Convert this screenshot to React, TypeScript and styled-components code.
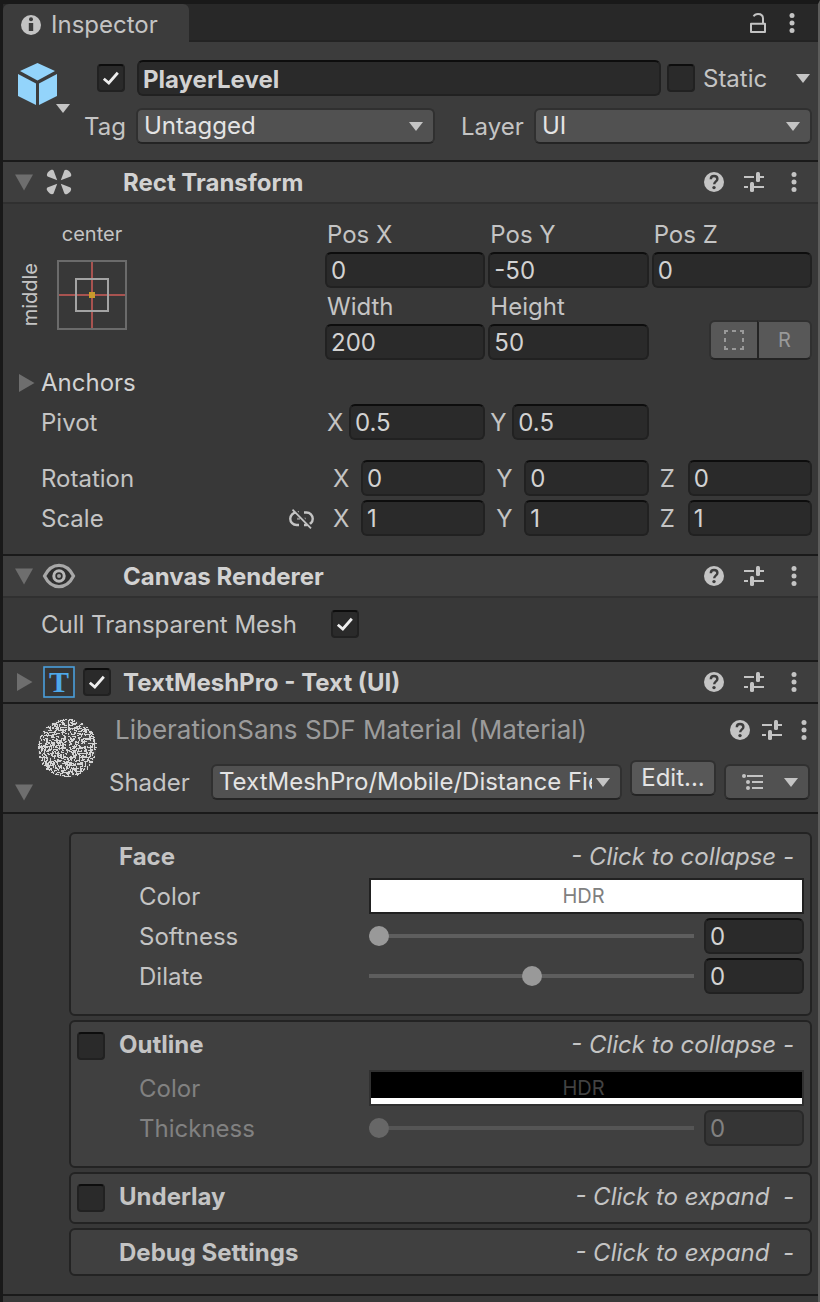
import React from "react";
import styled, { createGlobalStyle, css } from "styled-components";

const GlobalStyle = createGlobalStyle`
  *, *::before, *::after { box-sizing: border-box; }
  body {
    margin: 0;
    background: #383838;
    color: #c4c4c4;
    font-family: Inter, "Liberation Sans", sans-serif;
    font-size: 24px;
    line-height: 34px;
  }
  button, input, select { font: inherit; color: inherit; margin: 0; }
  label { padding-top: 2px; }
  svg { display: block; flex: none; overflow: visible; }
`;

/* ---------- window ---------- */

const Window = styled.main`
  min-height: 100vh;
  display: flex;
  flex-direction: column;
  background: #383838;
  border-top: 4px solid #191919;
  border-left: 3px solid #191919;
  border-right: 2px solid #5c5c5b;
`;

const TabBar = styled.div`
  display: flex;
  align-items: stretch;
  height: 38px;
  background: #282828;
  box-shadow: inset 0 -2px 0 #232323;
`;

const Tab = styled.button`
  display: flex;
  align-items: center;
  gap: 10px;
  width: 186px;
  padding: 4px 0 0 18px;
  border: 0;
  border-radius: 6px 6px 0 0;
  background: #3c3c3c;
`;

const TabTools = styled.div`
  margin-left: auto;
  display: flex;
  align-items: center;
  gap: 16px;
  padding-right: 16px;
`;

const IconButton = styled.button`
  display: flex;
  align-items: center;
  justify-content: center;
  padding: 0;
  border: 0;
  background: none;
`;

/* ---------- controls ---------- */

const sunken = css`
  border: 2px solid #212121;
  border-top-color: #0d0d0d;
  border-radius: 6px;
  background: #2a2a2a;
`;

const raised = css`
  border: 2px solid #303030;
  border-bottom-color: #242424;
  border-radius: 6px;
  background: #515151;
  color: #e4e4e4;
`;

const TextField = styled.input<{ $bold?: boolean }>`
  ${sunken}
  display: block;
  flex: 1;
  width: 100%;
  min-width: 0;
  height: 36px;
  padding: ${(p) => (p.$bold ? 2 : 0)}px 4px 0;
  color: #d2d2d2;
  font-weight: ${(p) => (p.$bold ? 700 : 400)};
  line-height: 30px;
  outline: none;
  &:disabled {
    background: #353535;
    border-color: #292929;
    color: #818181;
  }
`;

const CheckWrap = styled.span`
  position: relative;
  display: block;
  flex: none;
  width: 28px;
  height: 28px;
  svg {
    position: absolute;
    inset: 0;
    pointer-events: none;
  }
`;

const CheckInput = styled.input`
  ${sunken}
  appearance: none;
  display: block;
  width: 28px;
  height: 28px;
  border-radius: 4px;
`;

function CheckBox({ id, label, checked }: { id: string; label?: string; checked?: boolean }) {
  return (
    <CheckWrap>
      <CheckInput id={id} type="checkbox" aria-label={label} defaultChecked={checked} />
      {checked && (
        <svg width="28" height="28" viewBox="0 0 28 28">
          <path d="M6.8 14.8 11.8 19 20.8 8.8" fill="none" stroke="#eeeeee" strokeWidth="2.8" />
        </svg>
      )}
    </CheckWrap>
  );
}

const SelectWrap = styled.span<{ $grow: number }>`
  position: relative;
  display: block;
  flex: ${(p) => p.$grow} 1 0;
  min-width: 0;
  svg {
    position: absolute;
    right: 12px;
    top: 14px;
    pointer-events: none;
  }
`;

const SelectBox = styled.select`
  ${raised}
  appearance: none;
  display: block;
  width: 100%;
  height: 36px;
  padding: 0 28px 0 6px;
  line-height: 30px;
  outline: none;
`;

function Caret() {
  return (
    <svg width="14" height="9" viewBox="0 0 14 9">
      <path d="M0 0h14L7 9z" fill="#c4c4c4" />
    </svg>
  );
}

function Select({ id, value, grow = 1 }: { id: string; value: string; grow?: number }) {
  return (
    <SelectWrap $grow={grow}>
      <SelectBox id={id} defaultValue={value}>
        <option>{value}</option>
      </SelectBox>
      <Caret />
    </SelectWrap>
  );
}

const PushButton = styled.button`
  ${raised}
  flex: none;
  width: 86px;
  height: 36px;
  padding: 0;
  line-height: 30px;
  background: #585858;
`;

const ListButton = styled(PushButton)`
  display: flex;
  align-items: center;
  justify-content: space-between;
  padding: 0 10px 0 16px;
  background: #515151;
`;

const Range = styled.input`
  appearance: none;
  display: block;
  flex: 1;
  min-width: 0;
  height: 20px;
  background: none;
  &::-webkit-slider-runnable-track {
    height: 4px;
    background: #5e5e5e;
  }
  &::-webkit-slider-thumb {
    appearance: none;
    width: 20px;
    height: 20px;
    margin-top: -8px;
    border-radius: 50%;
    background: #999999;
  }
  &:disabled::-webkit-slider-runnable-track { background: #555555; }
  &:disabled::-webkit-slider-thumb { background: #676767; }
`;

/* ---------- icons ---------- */

function InfoIcon() {
  return (
    <svg width="20" height="20" viewBox="0 0 20 20">
      <circle cx="10" cy="10" r="10" fill="#c4c4c4" />
      <circle cx="10" cy="4.2" r="2" fill="#3c3c3c" />
      <path d="M7.8 8h4.4v8H7.8z" fill="#3c3c3c" />
    </svg>
  );
}

function LockIcon() {
  return (
    <svg width="16" height="20" viewBox="0 0 16 20">
      <path d="M1 10.8h14v8.2H1z" fill="none" stroke="#c4c4c4" strokeWidth="2" strokeLinejoin="round" />
      <path d="M3.6 3.4C4.4 1.8 6 1 8 1c3 0 5 1.8 5 4.6V10" fill="none" stroke="#c4c4c4" strokeWidth="2" />
    </svg>
  );
}

function DotsIcon() {
  return (
    <svg width="20" height="20" viewBox="0 0 20 20" fill="#c4c4c4">
      <circle cx="10" cy="2.5" r="2.5" />
      <circle cx="10" cy="10" r="2.5" />
      <circle cx="10" cy="17.5" r="2.5" />
    </svg>
  );
}

function HelpIcon() {
  return (
    <svg width="20" height="20" viewBox="0 0 20 20">
      <circle cx="10" cy="10" r="10" fill="#c4c4c4" />
      <path
        d="M6.8 7.2C6.8 5 8.2 4 10 4s3.4 1.1 3.4 2.9c0 2.4-3.2 2.5-3.2 5.4"
        fill="none"
        stroke="#3c3c3c"
        strokeWidth="2.4"
      />
      <circle cx="10" cy="15.6" r="1.7" fill="#3c3c3c" />
    </svg>
  );
}

function PresetIcon() {
  return (
    <svg width="20" height="20" viewBox="0 0 20 20" fill="#c4c4c4">
      <path d="M0 4h10v2H0zM16 4h4v2h-4zM0 14h4v2H0zM10 14h10v2H10z" />
      <rect x="12" y="0" width="4" height="10" rx="1.5" />
      <rect x="6" y="10" width="4" height="10" rx="1.5" />
    </svg>
  );
}

function FoldIcon({ open }: { open?: boolean }) {
  return (
    <svg width="20" height="20" viewBox="0 0 20 20" fill="#6e6e6e">
      <path d={open ? "M1 2.500h18l-9 16z" : "M3 1l15.500 9-15.500 9z"} />
    </svg>
  );
}

function CubeIcon() {
  return (
    <svg width="54" height="52" viewBox="0 0 54 52">
      <g fill="#93d4fb">
        <path d="M19.5 0 37 8 19.5 17.5 2 8z" />
        <path d="M0 11l18 9.5V42L0 33z" />
        <path d="M39 11l-18 9.5V42l18-9z" />
      </g>
      <path d="M38 41h14l-7 9z" fill="#c4c4c4" />
    </svg>
  );
}

function RectTransformIcon() {
  return (
    <svg width="32" height="32" viewBox="0 0 32 32" fill="#c4c4c4">
      {[0, 90, 180, 270].map((angle) => (
        <path
          key={angle}
          transform={`rotate(${angle} 16 16)`}
          d="M14.200 14.200 4.600 10.600C3.600 9.800 3.600 8.400 4.600 6.800 5.600 5.400 7 4.200 8.400 3.800 9.600 3.500 10.400 4 10.800 5z"
        />
      ))}
    </svg>
  );
}

function EyeIcon() {
  return (
    <svg width="32" height="26" viewBox="0 0 32 26" fill="none">
      <path
        d="M1.500 13C5 6 10 2.400 16 2.400S27 6 30.500 13C27 20 22 23.600 16 23.600S5 20 1.500 13z"
        fill="#303030"
        stroke="#a8a8a8"
        strokeWidth="3.200"
      />
      <circle cx="16" cy="13" r="5.200" stroke="#b8b8b8" strokeWidth="3" />
      <circle cx="16" cy="13" r="2" fill="#a0a0a0" />
    </svg>
  );
}

function TextIcon() {
  return (
    <svg width="32" height="32" viewBox="0 0 32 32">
      <rect x="1" y="1" width="30" height="30" fill="#363636" stroke="#4a9fdc" strokeWidth="1.600" />
      <text
        x="16"
        y="26"
        textAnchor="middle"
        fill="#4ea9ea"
        fontFamily="Liberation Serif, serif"
        fontWeight="700"
        fontSize="30"
      >
        T
      </text>
    </svg>
  );
}

function UnlinkIcon() {
  return (
    <svg width="26" height="20" viewBox="0 0 26 20" fill="none" stroke="#c4c4c4" strokeWidth="2.400">
      <path d="M10 3.500H7.500a6 6 0 0 0 0 12.500H10M15 3.500h2.500a6 6 0 0 1 0 12.500H15" />
      <path d="M8 9.800h3M14 9.800h3" strokeWidth="2" stroke="#8a8a8a" />
      <path d="M5 0 23.500 19" stroke="#383838" strokeWidth="2" />
      <path d="M3.500 0.600 22 19.400" strokeWidth="1.800" />
    </svg>
  );
}

function AnchorIcon() {
  return (
    <svg width="70" height="70" viewBox="0 0 70 70" fill="none" strokeWidth="2">
      <path d="M2 35h66M35 2v66" stroke="#a85350" />
      <path d="M1 1h68v68H1z" stroke="#6b6b6b" />
      <path d="M19 19h32v32H19z" stroke="#a3a3a3" />
      <path d="M32 32h6v6h-6z" fill="#c99a2c" />
    </svg>
  );
}

function BlueprintIcon() {
  return (
    <svg width="20" height="20" viewBox="0 0 20 20" fill="none" stroke="#999999" strokeWidth="2">
      <path d="M1 4V1h3M8 1h4M16 1h3v3M19 8v4M19 16v3h-3M12 19H8M4 19H1v-3M1 12V8" />
    </svg>
  );
}

function ListIcon() {
  return (
    <svg width="22" height="16" viewBox="0 0 22 16" fill="#c4c4c4">
      <circle cx="2" cy="2" r="2" />
      <circle cx="6" cy="8" r="2" />
      <circle cx="6" cy="14" r="2" />
      <path d="M5 1h16v2H5zM10 7h11v2H10zM10 13h11v2H10z" />
    </svg>
  );
}

/* Scattered cells imitate a font atlas wrapped over a preview sphere. */
const atlasPath = (() => {
  let seed = 7;
  const next = () => {
    seed = (seed * 16807) % 2147483647;
    return seed / 2147483647;
  };
  const parts: string[] = [];
  for (let y = 1; y < 59; y += 1) {
    for (let x = 1; x < 59; x += 1) {
      const dx = x - 29.5;
      const dy = y - 29.5;
      if (dx * dx + dy * dy > 29 * 29) continue;
      if (Math.abs(dx) < 1 && y < 30) continue;
      if (next() > 0.68) parts.push(next() > 0.5 ? `M${x} ${y}h2v1h-2z` : `M${x} ${y}h1v2h-1z`);
    }
  }
  return parts.join("");
})();

function SphereIcon() {
  return (
    <svg width="60" height="60" viewBox="0 0 60 60">
      <circle cx="30" cy="30" r="29.5" fill="#484848" />
      <path d={atlasPath} fill="#d4d4d4" />
    </svg>
  );
}

/* ---------- object header ---------- */

const ObjectHeader = styled.header`
  display: flex;
  padding: 18px 6px 16px 15px;
  background: #3c3c3c;
  border-bottom: 2px solid #1a1a1a;
`;

const ObjectIcon = styled(IconButton)`
  width: 66px;
  height: 58px;
  justify-content: flex-start;
`;

const ObjectRows = styled.div`
  flex: 1;
  min-width: 0;
  display: flex;
  flex-direction: column;
  gap: 12px;
`;

const ObjectRow = styled.div`
  display: flex;
  align-items: center;
`;

const NameRow = styled(ObjectRow)`
  gap: 6px;
  padding-left: 13px;
`;

const NameField = styled(TextField)`
  margin-left: 6px;
`;

const StaticLabel = styled.label`
  width: 86px;
  padding-left: 2px;
`;

const StaticMenu = styled(IconButton)`
  width: 19px;
  height: 28px;
`;

const TagLabel = styled.label`
  width: 52px;
`;

const LayerLabel = styled.label`
  width: 99px;
  padding-left: 26px;
`;

/* ---------- components ---------- */

const ComponentHead = styled.div<{ $closed?: boolean }>`
  display: flex;
  align-items: center;
  height: 42px;
  padding: 0 14px 0 11px;
  background: #3e3e3e;
  border-bottom: 2px solid ${(p) => (p.$closed ? "#1a1a1a" : "#303030")};
`;

const HeadIcons = styled.div`
  display: flex;
  align-items: center;
  gap: 8px;
  width: 80px;
  margin-left: 9px;
`;

const HeadTitle = styled.h2`
  margin: 0;
  flex: 1;
  min-width: 0;
  padding-top: 2px;
  font-size: 24px;
  font-weight: 700;
  color: #d2d2d2;
`;

const HeadTools = styled.div<{ $gap?: number }>`
  display: flex;
  align-items: center;
  gap: ${(p) => p.$gap ?? 20}px;
`;

function ToolIcons({ gap }: { gap?: number }) {
  return (
    <HeadTools $gap={gap}>
      <IconButton aria-label="Help"><HelpIcon /></IconButton>
      <IconButton aria-label="Presets"><PresetIcon /></IconButton>
      <IconButton aria-label="More"><DotsIcon /></IconButton>
    </HeadTools>
  );
}

function ComponentHeader({
  title,
  open,
  children,
}: {
  title: string;
  open?: boolean;
  children: React.ReactNode;
}) {
  return (
    <ComponentHead $closed={!open}>
      <IconButton aria-label={"Fold " + title} aria-expanded={!!open}><FoldIcon open={open} /></IconButton>
      <HeadIcons>{children}</HeadIcons>
      <HeadTitle>{title}</HeadTitle>
      <ToolIcons />
    </ComponentHead>
  );
}

const TransformBody = styled.div`
  display: flex;
  flex-direction: column;
  gap: 4px;
  padding: 12px 6px 18px 0;
  border-bottom: 2px solid #1a1a1a;
`;

const Split = styled.div<{ $spaced?: boolean }>`
  display: grid;
  grid-template-columns: 322px minmax(0, 1fr);
  margin-top: ${(p) => (p.$spaced ? 16 : 0)}px;
`;

const Cells = styled.div`
  display: grid;
  grid-template-columns: repeat(3, minmax(0, 1fr));
  column-gap: 3px;
  align-items: end;
`;

const StackedField = styled.div`
  display: flex;
  flex-direction: column;
  label { padding-left: 2px; }
  input { flex: none; }
`;

const InlineField = styled.div<{ $wide?: boolean }>`
  display: flex;
  label {
    flex: none;
    width: ${(p) => (p.$wide ? 36 : 24)}px;
    padding-left: ${(p) => (p.$wide ? 8 : 2)}px;
  }
`;

const RowLabel = styled.div`
  display: flex;
  align-items: center;
  justify-content: space-between;
  padding: 2px 10px 0 38px;
`;

const AnchorsLabel = styled.button`
  display: flex;
  align-items: center;
  gap: 5px;
  padding: 2px 0 0 13px;
  border: 0;
  background: none;
  color: #d2d2d2;
`;

const AnchorPreset = styled.div`
  display: grid;
  grid-template-columns: 54px 70px;
  grid-template-rows: 36px 70px;
  row-gap: 8px;
  justify-items: center;
  align-items: center;
  font-size: 20px;
`;

const CenterCaption = styled.span`
  grid-column: 2;
`;

const MiddleCaption = styled.span`
  writing-mode: vertical-rl;
  transform: rotate(180deg);
  line-height: 24px;
`;

const ToggleGroup = styled.div`
  display: flex;
  justify-self: end;
  width: 103px;
  height: 40px;
`;

const ToggleButton = styled.button`
  ${raised}
  flex: 1;
  display: flex;
  align-items: center;
  justify-content: center;
  padding: 0;
  background: #585858;
  color: #999999;
  font-size: 20px;
  &:first-child {
    flex: none;
    width: 48px;
    border-right: 0;
    border-radius: 6px 0 0 6px;
  }
  &:last-child {
    border-left-color: #242424;
    border-radius: 0 6px 6px 0;
  }
`;

function Stacked({ id, label, value }: { id: string; label: string; value: string }) {
  return (
    <StackedField>
      <label htmlFor={id}>{label}</label>
      <TextField id={id} defaultValue={value} />
    </StackedField>
  );
}

function Vector({ name, values, wide }: { name: string; values: string[]; wide?: boolean }) {
  return (
    <Cells>
      {values.map((value, i) => {
        const axis = "XYZ"[i];
        const id = `${name}-${axis}`;
        return (
          <InlineField key={id} $wide={wide}>
            <label htmlFor={id}>{axis}</label>
            <TextField id={id} defaultValue={value} />
          </InlineField>
        );
      })}
    </Cells>
  );
}

const CanvasBody = styled.div`
  display: flex;
  align-items: center;
  padding: 8px 6px 18px 38px;
  border-bottom: 2px solid #1a1a1a;
  label { width: 290px; }
`;

/* ---------- material ---------- */

const MaterialHead = styled.div`
  display: flex;
  height: 110px;
  padding-left: 11px;
  background: #3c3c3c;
  border-bottom: 2px solid #1a1a1a;
`;

const MaterialFold = styled(IconButton)`
  align-self: flex-end;
  margin-bottom: 10px;
`;

const MaterialPreview = styled.div`
  width: 65px;
  padding: 14px 0 0 3px;
`;

const MaterialMain = styled.div`
  flex: 1;
  min-width: 0;
  padding: 8px 8px 0 10px;
`;

const MaterialTitleRow = styled.div`
  display: flex;
  align-items: center;
  justify-content: space-between;
  margin: 0 -4px 12px 0;
`;

const MaterialTitle = styled.h2`
  margin: 0;
  padding-left: 6px;
  font-size: 26px;
  font-weight: 400;
  line-height: 36px;
  color: #9b9b9b;
`;

const ShaderRow = styled.div`
  display: flex;
  align-items: flex-end;
  gap: 8px;
  height: 40px;
  label {
    flex: none;
    width: 94px;
  }
`;

const EditButton = styled(PushButton)`
  align-self: flex-start;
`;

const PanelList = styled.div`
  display: flex;
  flex-direction: column;
  gap: 4px;
  padding: 18px 6px 18px 66px;
  border-bottom: 2px solid #1a1a1a;
`;

const Panel = styled.section<{ $open?: boolean }>`
  display: flex;
  flex-direction: column;
  gap: 4px;
  padding: 4px 6px ${(p) => (p.$open ? 20 : 4)}px 6px;
  border: 2px solid #232323;
  border-radius: 6px;
  background: #404040;
`;

const PanelHead = styled.div<{ $toggle?: boolean }>`
  display: flex;
  align-items: center;
  height: ${(p) => (p.$toggle ? 40 : 36)}px;
`;

const PanelToggle = styled.div`
  width: 42px;
`;

const PanelTitle = styled.h3`
  margin: 0;
  padding-top: 2px;
  flex: 1;
  align-self: flex-start;
  font-size: 24px;
  font-weight: 700;
`;

const PanelHint = styled.button`
  align-self: flex-start;
  padding: 2px 10px 0 0;
  border: 0;
  background: none;
  font-style: italic;
  white-space: pre;
`;

const PropertyRow = styled.div<{ $off?: boolean }>`
  display: flex;
  align-items: center;
  gap: 10px;
  padding-left: 62px;
  color: ${(p) => (p.$off ? "#818181" : "#c4c4c4")};
  label {
    flex: none;
    width: 220px;
  }
`;

const NumberBox = styled.div`
  display: flex;
  width: 100px;
`;

const ColorSwatch = styled.button<{ $black?: boolean }>`
  flex: 1;
  height: 36px;
  padding: 0 6px 0 0;
  border: 2px solid ${(p) => (p.$black ? "#303030" : "#212121")};
  border-radius: 0;
  background: ${(p) =>
    p.$black ? "linear-gradient(#000 26px, #fff 26px)" : "#ffffff"};
  color: ${(p) => (p.$black ? "#424242" : "#808080")};
  font-size: 20px;
  line-height: 32px;
`;

function PanelHeader({
  title,
  open,
  toggle,
}: {
  title: string;
  open?: boolean;
  toggle?: boolean;
}) {
  return (
    <PanelHead $toggle={toggle}>
      <PanelToggle>{toggle && <CheckBox id={"enable-" + title} label={title} />}</PanelToggle>
      <PanelTitle>{title}</PanelTitle>
      <PanelHint>{open ? "- Click to collapse -" : "- Click to expand  -"}</PanelHint>
    </PanelHead>
  );
}

function SliderRow({ id, label, position, off }: { id: string; label: string; position: number; off?: boolean }) {
  return (
    <PropertyRow $off={off}>
      <label htmlFor={id}>{label}</label>
      <Range id={id} type="range" min={0} max={100} defaultValue={position} disabled={off} />
      <NumberBox>
        <TextField aria-label={label + " value"} defaultValue="0" disabled={off} />
      </NumberBox>
    </PropertyRow>
  );
}

/* ---------- page ---------- */

export default function App() {
  return (
    <Window>
      <GlobalStyle />
      <TabBar>
        <Tab>
          <InfoIcon />
          Inspector
        </Tab>
        <TabTools>
          <IconButton aria-label="Lock"><LockIcon /></IconButton>
          <IconButton aria-label="Tab menu"><DotsIcon /></IconButton>
        </TabTools>
      </TabBar>

      <ObjectHeader>
        <ObjectIcon aria-label="Object icon"><CubeIcon /></ObjectIcon>
        <ObjectRows>
          <NameRow>
            <CheckBox id="active" label="Active" checked />
            <NameField $bold aria-label="Name" defaultValue="PlayerLevel" />
            <CheckBox id="static" />
            <StaticLabel htmlFor="static">Static</StaticLabel>
            <StaticMenu aria-label="Static options"><Caret /></StaticMenu>
          </NameRow>
          <ObjectRow>
            <TagLabel htmlFor="tag">Tag</TagLabel>
            <Select id="tag" value="Untagged" grow={299} />
            <LayerLabel htmlFor="layer">Layer</LayerLabel>
            <Select id="layer" value="UI" grow={278} />
          </ObjectRow>
        </ObjectRows>
      </ObjectHeader>

      <ComponentHeader title="Rect Transform" open>
        <RectTransformIcon />
      </ComponentHeader>
      <TransformBody>
        <Split>
          <AnchorPreset>
            <CenterCaption>center</CenterCaption>
            <MiddleCaption>middle</MiddleCaption>
            <IconButton aria-label="Anchor presets"><AnchorIcon /></IconButton>
          </AnchorPreset>
          <Cells>
            <Stacked id="pos-x" label="Pos X" value="0" />
            <Stacked id="pos-y" label="Pos Y" value="-50" />
            <Stacked id="pos-z" label="Pos Z" value="0" />
            <Stacked id="width" label="Width" value="200" />
            <Stacked id="height" label="Height" value="50" />
            <ToggleGroup>
              <ToggleButton aria-label="Blueprint mode"><BlueprintIcon /></ToggleButton>
              <ToggleButton>R</ToggleButton>
            </ToggleGroup>
          </Cells>
        </Split>
        <AnchorsLabel aria-expanded={false}>
          <FoldIcon />
          Anchors
        </AnchorsLabel>
        <Split>
          <RowLabel>Pivot</RowLabel>
          <Vector name="pivot" values={["0.5", "0.5"]} />
        </Split>
        <Split $spaced>
          <RowLabel>Rotation</RowLabel>
          <Vector name="rotation" values={["0", "0", "0"]} wide />
        </Split>
        <Split>
          <RowLabel>
            Scale
            <IconButton aria-label="Constrain proportions"><UnlinkIcon /></IconButton>
          </RowLabel>
          <Vector name="scale" values={["1", "1", "1"]} wide />
        </Split>
      </TransformBody>

      <ComponentHeader title="Canvas Renderer" open>
        <EyeIcon />
      </ComponentHeader>
      <CanvasBody>
        <label htmlFor="cull">Cull Transparent Mesh</label>
        <CheckBox id="cull" checked />
      </CanvasBody>

      <ComponentHeader title="TextMeshPro - Text (UI)">
        <TextIcon />
        <CheckBox id="tmp" label="TextMeshPro enabled" checked />
      </ComponentHeader>

      <MaterialHead>
        <MaterialFold aria-label="Fold material"><FoldIcon open /></MaterialFold>
        <MaterialPreview><SphereIcon /></MaterialPreview>
        <MaterialMain>
          <MaterialTitleRow>
            <MaterialTitle>LiberationSans SDF Material (Material)</MaterialTitle>
            <ToolIcons gap={12} />
          </MaterialTitleRow>
          <ShaderRow>
            <label htmlFor="shader">Shader</label>
            <Select id="shader" value="TextMeshPro/Mobile/Distance Field" />
            <EditButton>Edit...</EditButton>
            <ListButton aria-label="Material list">
              <ListIcon />
              <Caret />
            </ListButton>
          </ShaderRow>
        </MaterialMain>
      </MaterialHead>

      <PanelList>
        <Panel $open>
          <PanelHeader title="Face" open />
          <PropertyRow>
            <label htmlFor="face-color">Color</label>
            <ColorSwatch id="face-color">HDR</ColorSwatch>
          </PropertyRow>
          <SliderRow id="softness" label="Softness" position={0} />
          <SliderRow id="dilate" label="Dilate" position={50} />
        </Panel>
        <Panel $open>
          <PanelHeader title="Outline" open toggle />
          <PropertyRow $off>
            <label htmlFor="outline-color">Color</label>
            <ColorSwatch id="outline-color" $black disabled>HDR</ColorSwatch>
          </PropertyRow>
          <SliderRow id="thickness" label="Thickness" position={0} off />
        </Panel>
        <Panel>
          <PanelHeader title="Underlay" toggle />
        </Panel>
        <Panel>
          <PanelHeader title="Debug Settings" />
        </Panel>
      </PanelList>
    </Window>
  );
}
